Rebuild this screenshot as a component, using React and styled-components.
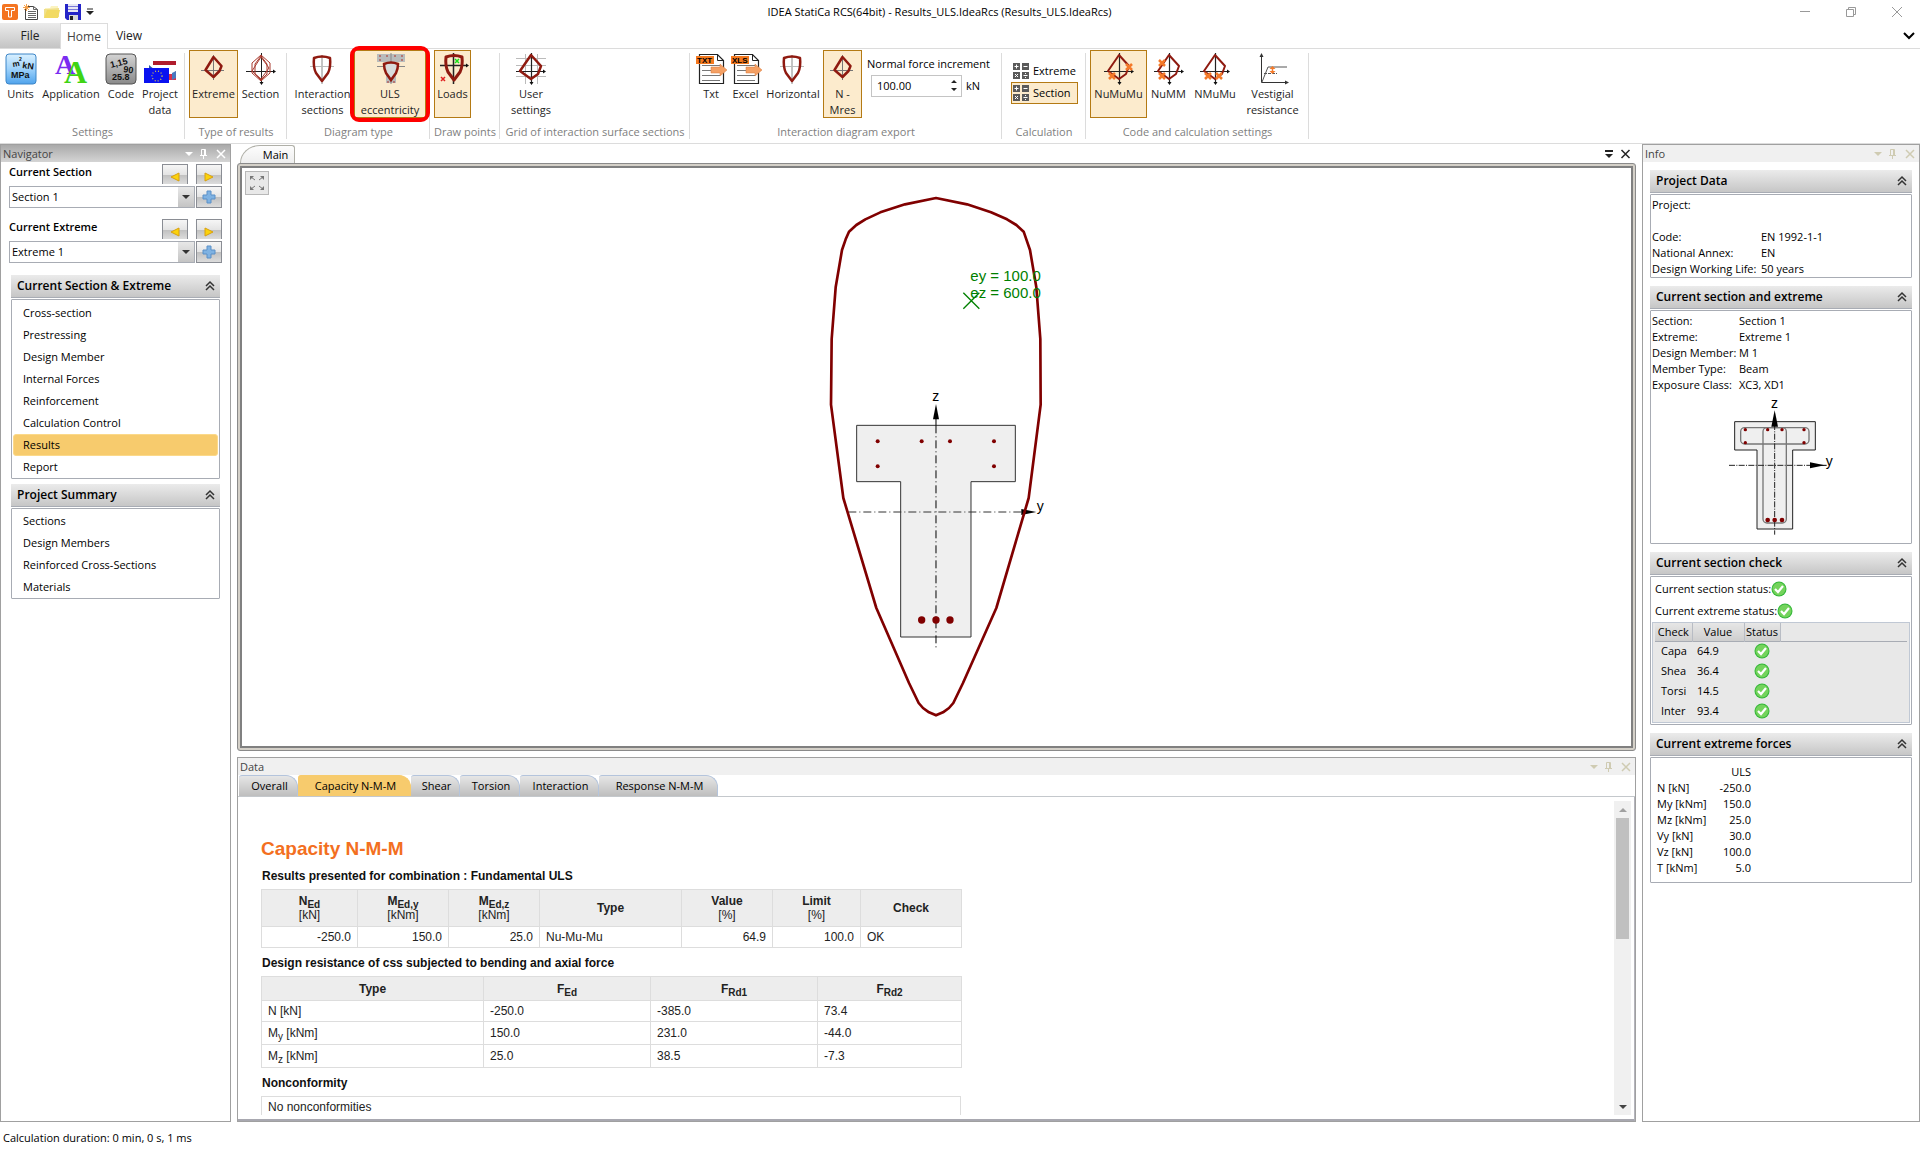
import React from "react"
import styled, { createGlobalStyle, css } from "styled-components"

const RED = "#8f1a10"
const BAR = "#800000"

const GlobalStyle = createGlobalStyle`
  * {
    box-sizing: border-box;
  }
  body {
    margin: 0;
    background: #fff;
    color: #000;
    font-family: "Open Sans", "Noto Sans", sans-serif;
    font-size: 11px;
    line-height: 16px;
  }
  button, input, select {
    font: inherit;
    color: inherit;
  }
  button {
    padding: 0;
    border: 0;
    background: none;
  }
  svg {
    display: block;
    flex: none;
    overflow: visible;
  }
`

/* ---------- icons ---------- */

const Icon = ({ w = 32, h = w, children }) => (
  <svg width={w} height={h} viewBox={`0 0 ${w} ${h}`} fill="none" aria-hidden="true">
    {children}
  </svg>
)

const LogoIcon = () => (
  <Icon w={16}>
    <rect width="16" height="16" rx="2" fill="#f47421" />
    <path d="M3.500 3.500h9v3h-3v6.500h-3v-6.500h-3z" stroke="#fff" strokeWidth="1" />
  </Icon>
)

const NewIcon = () => (
  <Icon w={16}>
    <path d="M2.500 2.500h8l4 3v10h-12z" fill="#fff" stroke="#444" />
    <path d="M10.500 2.500v3h4M5 7.500h8M5 9.500h8M5 11.500h8M5 13.500h8" stroke="#666" />
    <path d="M3.500 0v7M0 3.500h7M1 1l5 5M6 1l-5 5" stroke="#f5a04a" />
  </Icon>
)

const OpenIcon = () => (
  <Icon w={16}>
    <path d="M1 4h5l1-2h7v4H1z" fill="#fbf3c0" />
    <path d="M0 14V5h3l12-1v9z" fill="#f0e08a" />
    <path d="M0 14L3 6h13l-2 8z" fill="#f2da62" />
  </Icon>
)

const SaveIcon = () => (
  <Icon w={16}>
    <path d="M0 0h16v16H2l-2-2z" fill="#2424c8" />
    <rect x="3" y="0" width="10" height="8" fill="#e8e8f4" />
    <path d="M3 2.500h10M3 5.500h10" stroke="#7a7ad8" />
    <rect x="4" y="11" width="9" height="5" fill="#d8d8d8" />
    <rect x="5" y="12" width="3" height="4" fill="#222" />
  </Icon>
)

const CaretIcon = () => (
  <Icon w={8} h={8}>
    <path d="M1 1h6" stroke="#222" />
    <path d="M0 3h8L4 7z" fill="#222" />
  </Icon>
)

const UnitsIcon = () => (
  <Icon>
    <defs>
      <linearGradient id="units" x1="0" y1="0" x2="0" y2="1">
        <stop offset="0" stopColor="#d9f0ff" />
        <stop offset="0.5" stopColor="#9ed2fb" />
        <stop offset="1" stopColor="#4fa3ec" />
      </linearGradient>
    </defs>
    <rect x="1" y="1" width="30" height="30" rx="3" fill="url(#units)" stroke="#3d86c8" />
    <g fill="#111" fontFamily="Liberation Sans" fontWeight="bold">
      <text x="8" y="14" fontSize="8" transform="rotate(-10 8 14)">m</text>
      <text x="14" y="8" fontSize="5">2</text>
      <text x="17" y="15" fontSize="9" transform="rotate(8 17 15)">kN</text>
      <text x="6" y="25" fontSize="9">MPa</text>
    </g>
  </Icon>
)

const ApplicationIcon = () => (
  <Icon>
    <g fontFamily="Liberation Serif" fontWeight="bold">
      <text x="0" y="21" fontSize="28" fill="#7a2cf0">A</text>
      <text x="9" y="30" fontSize="32" fill="#3fd414">A</text>
    </g>
  </Icon>
)

const CodeIcon = () => (
  <Icon>
    <defs>
      <linearGradient id="code" x1="0" y1="0" x2="0" y2="1">
        <stop offset="0" stopColor="#d4d4d4" />
        <stop offset="1" stopColor="#8a8a8a" />
      </linearGradient>
    </defs>
    <rect x="1" y="1" width="30" height="30" rx="4" fill="url(#code)" stroke="#555" />
    <g fill="#111" fontFamily="Liberation Sans" fontWeight="bold" fontSize="9">
      <text x="6" y="15" transform="rotate(-14 6 15)">1,15</text>
      <text x="18" y="19" transform="rotate(8 18 19)">90</text>
      <text x="7" y="27">25.8</text>
    </g>
  </Icon>
)

const ProjectIcon = () => (
  <Icon>
    <path d="M9 10h23" stroke="#b01c2c" strokeWidth="4" />
    <path d="M5 12l6 5H5z" fill="#2b5aa8" />
    <path d="M24 21h5l3-3v9h-8z" fill="#d8304a" />
    <path d="M28 20l4-2v7l-4 2z" fill="#4a78c0" />
    <rect x="0" y="15" width="25" height="15" fill="#0a12f0" />
    <circle cx="13" cy="23" r="5" stroke="#e8d83c" strokeWidth="1.200" strokeDasharray="1 2" />
  </Icon>
)

const ExtremeIcon = () => (
  <Icon>
    <path d="M15.500 2v25M3 17.500h23" stroke="#777" />
    <path d="M15.500 4l8 9-2 5-6 6-8-7z" stroke={RED} strokeWidth="2.500" strokeLinejoin="round" />
  </Icon>
)

const SectionIcon = () => (
  <Icon>
    <path d="M16.500 0v31M1 18.500h29" stroke="#222" />
    <path d="M31 18.500l-3-2v4zM16.500 32l-2-3h4z" fill="#111" />
    <g stroke="#a8382c">
      <path d="M16 2L7 10v10l9 8 9-8V10z" />
      <path d="M16 3l-6 8v10l6 6 6-6V11z" />
      <path d="M16 4l-9 14 9 8 8-11z" />
    </g>
  </Icon>
)

const SHIELD = "M7 5Q15 2 23 5Q24 14 21 20L15 28L9 20Q6 14 7 5Z"

const ShieldIcon = () => (
  <Icon>
    <path d="M15 2v29" stroke="#888" />
    <path d="M3 13.500h24" stroke="#bbb" />
    <path d={SHIELD} stroke={RED} strokeWidth="2.500" strokeLinejoin="round" />
  </Icon>
)

const UlsIcon = () => (
  <Icon>
    <path d="M3 1h28v8H22v21H12V9H3z" fill="#b9bcbc" />
    <path d="M17 0v31M3 13.500h28" stroke="#888" />
    <path d="M10 11q7-3 14 0 0 5-2 9l-5 7-5-7q-2-4-2-9z" fill="#d8dcdc" stroke={RED} strokeWidth="2.500" />
    <path d="M5 3h2M5 7h2M12 3h2M20 3h2M27 3h2M27 7h2M13 29h2M19 29h2" stroke="#b03028" />
  </Icon>
)

const LoadsIcon = () => (
  <Icon>
    <path d="M16.500 0v31M3 12.500h27" stroke="#222" strokeWidth="1.500" />
    <path d="M32 12.500l-3-2v4z" fill="#111" />
    <path d={SHIELD} stroke={RED} strokeWidth="3" strokeLinejoin="round" transform="translate(2 -1)" />
    <path d="M18 6l4 4M22 6l-4 4" stroke="#18e018" strokeWidth="1.500" />
    <path d="M4 24l4 4M8 24l-4 4" stroke="#e02020" strokeWidth="1.500" />
  </Icon>
)

const NEU = "M16 2L26 13l-3 8-7 5L5 18z"

const UserIcon = () => (
  <Icon>
    <path d="M10.500 1v30M22.500 1v30M1 5.500h30M1 12.500h30M1 23.500h30" stroke="#bbb" />
    <path d="M16.500 0v31M1 18.500h29" stroke="#222" strokeWidth="1.200" />
    <path d="M31 18.500l-3-2v4zM16.500 32l-2-3h4z" fill="#111" />
    <path d={NEU} stroke={RED} strokeWidth="2.500" strokeLinejoin="round" />
  </Icon>
)

const NeuIcon = ({ marks }) => (
  <Icon>
    <path d="M16.500 0v31M1 18.500h29" stroke="#222" strokeWidth="1.200" />
    <path d="M31 18.500l-3-2v4zM16.500 32l-2-3h4z" fill="#111" />
    <path d={NEU} stroke={RED} strokeWidth="2" strokeLinejoin="round" />
    {marks.map(([x, y]) => (
      <path
        key={`${x}-${y}`}
        d={`M${x - 3} ${y - 3}l6 6M${x + 3} ${y - 3}l-6 6`}
        stroke="#f47a2a"
        strokeWidth="2.500"
      />
    ))}
  </Icon>
)

const FileIcon = ({ tag }) => (
  <Icon>
    <path d="M4.500 1.500h18l6 6v23h-24z" fill="#fff" stroke="#222" strokeWidth="1.200" />
    <path d="M22.500 1.500v6h6" stroke="#222" />
    <path d="M7 12.500h18M7 17.500h18M7 22.500h18M7 27.500h18" stroke="#777" />
    <rect x="1" y="3" width="18" height="8" fill="#f47a20" />
    <text x="2" y="10" fontFamily="Liberation Sans" fontWeight="bold" fontSize="8" fill="#000">{tag}</text>
    <path d="M16 14h9v-3l7 6-7 6v-3h-9z" fill="#f4a064" stroke="#d87838" strokeWidth="0.500" />
  </Icon>
)

const VestigialIcon = () => (
  <Icon>
    <path d="M4.500 3v26.500H30" stroke="#333" />
    <path d="M4.500 0l-2 4h4zM32 29.500l-4-2v4z" fill="#333" />
    <path d="M5 29l6-15h19" stroke="#555" />
    <path d="M7 20.500h13" stroke="#555" strokeDasharray="3 1" />
    <path d="M15.500 14v6" stroke="#f47a2a" strokeWidth="1.500" />
    <path d="M15.500 13l-3 3h6zM15.500 21l-3-3h6z" fill="#f47a2a" />
  </Icon>
)

const CalcIcon = () => (
  <Icon w={16}>
    <path d="M0 0h7v7H0zM9 0h7v7H9zM0 9h7v7H0zM9 9h7v7H9z" fill="#5a5a5a" />
    <path
      d="M3.500 1.500v4M1.500 3.500h4M10.500 3.500h4M2 11l3 3M5 11l-3 3M10.500 12.500h4M12.500 10v1M12.500 14v1"
      stroke="#fff"
    />
  </Icon>
)

const PaneTools = ({ color }) => (
  <Icon w={42} h={10}>
    <path d="M1 3h8L5 7z" fill={color} />
    <path d="M17.500 6.500v-6h4v6M16 6.500h7M19.500 7v3M20.500 1v5" stroke={color} />
    <path d="M33 1l8 8M41 1l-8 8" stroke={color} strokeWidth="1.500" />
  </Icon>
)

const CollapseIcon = () => (
  <Icon w={10}>
    <path d="M1 5l4-4 4 4M1 9l4-4 4 4" stroke="#333" strokeWidth="1.500" />
  </Icon>
)

const OkIcon = () => (
  <Icon w={16}>
    <circle cx="8" cy="8" r="7.500" fill="#35b83a" />
    <circle cx="8" cy="8" r="6.500" fill="#74d35c" />
    <path d="M4 8l3 3 5-6" stroke="#fff" strokeWidth="2.200" />
  </Icon>
)

const ArrowIcon = ({ right }) => (
  <Icon w={10}>
    <path d={right ? "M1 1l8 4-8 4z" : "M9 1L1 5l8 4z"} fill="#fbd20c" stroke="#d8a010" />
  </Icon>
)

const PlusIcon = () => (
  <Icon w={14}>
    <path d="M5 1h4v4h4v4H9v4H5V9H1V5h4z" fill="#7fb2e2" stroke="#5a90c8" />
  </Icon>
)

/* ---------- shell ---------- */

const Page = styled.div`
  min-height: 100vh;
  display: grid;
  grid-template-rows: auto auto auto 1fr auto;
`

const TitleBar = styled.header`
  display: grid;
  grid-template-columns: 1fr auto 1fr;
  align-items: center;
  height: 23px;
`

const QuickAccess = styled.div`
  display: flex;
  align-items: center;
  gap: 5px;
  padding-left: 2px;
`

const WindowTitle = styled.h1`
  margin: 0;
  padding-right: 41px;
  font-size: 11px;
  font-weight: 400;
`

const WindowButtons = styled.div`
  display: flex;
  justify-content: flex-end;

  button {
    display: grid;
    place-items: center;
    width: 46px;
    height: 22px;
  }
`

const TabBar = styled.nav`
  display: flex;
  height: 26px;
  border-bottom: 1px solid #dcdcdc;
`

const RibbonTab = styled.button`
  height: 25px;
  padding: 0 8px;
  font-size: 12px;
  color: #222;

  ${({ $kind }) =>
    $kind === "file" &&
    css`
      width: 60px;
      background: linear-gradient(#ececec, #c4c4c4);
    `}
  ${({ $kind }) =>
    $kind === "active" &&
    css`
      height: 26px;
      padding: 0 6px;
      border: 1px solid #dcdcdc;
      border-bottom: 0;
      background: #fff;
      color: #444;
    `}
`

const Expander = styled.button`
  margin-left: auto;
  padding-right: 5px;
`

const Ribbon = styled.section`
  display: flex;
  height: 95px;
  padding-top: 1px;
  border-bottom: 1px solid #dcdcdc;
`

const Group = styled.div`
  display: flex;
  flex: none;
  flex-direction: column;
  justify-content: space-between;
  position: relative;
  width: ${({ $width }) => $width}px;
  padding-bottom: 3px;

  &::after {
    content: "";
    position: absolute;
    top: 3px;
    right: 0;
    width: 1px;
    height: 86px;
    background: #dcdcdc;
  }
`

const GroupTools = styled.div`
  display: flex;
  height: 68px;
  padding-left: ${({ $indent = 0 }) => $indent}px;
`

const GroupLabel = styled.div`
  color: #808080;
  text-align: center;
  white-space: nowrap;
`

const RibbonButton = styled.button`
  display: flex;
  flex: none;
  flex-direction: column;
  align-items: center;
  gap: 1px;
  width: ${({ $width }) => $width}px;
  padding-top: 2px;
  border: 1px solid transparent;
  color: #1e1e1e;
  white-space: pre;

  ${({ $on }) =>
    $on &&
    css`
      border-color: #b47a14;
      background: #fcebcd;
    `}
`

/* red ring drawn round the ULS eccentricity button */
const Callout = styled.div`
  position: relative;
  display: flex;

  &::after {
    content: "";
    position: absolute;
    inset: -4px;
    border: 4px solid #f00;
    border-radius: 9px;
    pointer-events: none;
    z-index: 1;
  }
`

const Increment = styled.div`
  padding: 6px 0 0 5px;

  label {
    display: block;
    height: 19px;
    white-space: nowrap;
  }
`

const SpinRow = styled.div`
  display: flex;
  align-items: center;
  gap: 4px;
  padding-left: 4px;
`

const Spinner = styled.div`
  display: flex;
  align-items: center;
  width: 91px;
  height: 22px;
  padding-right: 4px;
  border: 1px solid #c4c4c4;

  input {
    flex: 1;
    min-width: 0;
    padding: 0 5px;
    border: 0;
    outline: 0;
    background: none;
  }
`

const CalcTools = styled.div`
  display: flex;
  flex-direction: column;
  align-items: flex-start;
  padding: 10px 0 0 9px;
`

const CalcButton = styled.button`
  display: flex;
  align-items: center;
  gap: 4px;
  width: 67px;
  height: 22px;
  padding-left: 1px;
  border: 1px solid ${({ $on }) => ($on ? "#b47a14" : "transparent")};
  background: ${({ $on }) => ($on ? "#fcebcd" : "none")};
`

const Workspace = styled.main`
  display: grid;
  grid-template-columns: 231px minmax(0, 1fr) 278px;
  gap: 6px;
  min-height: 0;
`

const StatusBar = styled.footer`
  height: 30px;
  padding: 8px 3px 0;
`

/* ---------- panes ---------- */

const Pane = styled.section`
  display: flex;
  flex-direction: column;
  min-width: 0;
  border: 1px solid #a0a0a0;
`

const PaneTitle = styled.div`
  display: flex;
  flex: none;
  align-items: center;
  justify-content: space-between;
  height: 17px;
  padding: 0 4px 0 2px;
  color: #444;
  background: ${({ $active }) => ($active ? "linear-gradient(#aaa, #d4d4d4)" : "#f0f0f0")};
`

const Pickers = styled.div`
  padding-bottom: 3px;
`

const Picker = styled.div`
  display: grid;
  grid-template-columns: 145px 26px 26px;
  column-gap: 8px;
  padding: 2px 0 9px 8px;

  label {
    font-weight: 600;
  }
`

const ComboRow = styled.div`
  grid-column: 1 / -1;
  display: flex;
  gap: 1px;
  margin-top: 2px;
`

const Combo = styled.div`
  position: relative;
  width: 187px;
  height: 22px;

  select {
    width: 100%;
    height: 100%;
    padding: 0 22px 0 2px;
    border: 1px solid #a8acb4;
    border-radius: 0;
    background: #fff;
    appearance: none;
  }
`

const ComboArrow = styled.span`
  position: absolute;
  top: 1px;
  right: 1px;
  display: grid;
  place-items: center;
  width: 16px;
  height: 20px;
  background: linear-gradient(#e8e8e8, #c4c4c4);
  pointer-events: none;
`

const StepButton = styled.button`
  display: grid;
  place-items: center;
  width: 26px;
  height: ${({ $tall }) => ($tall ? 22 : 20)}px;
  padding-top: ${({ $tall }) => ($tall ? 0 : 4)}px;
  border: 1px solid #8a8d94;
  border-bottom-width: ${({ $tall }) => ($tall ? 1 : 0)}px;
  background: linear-gradient(#f6f6f6 0%, #e4e4e4 50%, #c0c0c0 52%, #dcdcdc 100%);
`

const Block = styled.section`
  margin: 0 ${({ $side = 7 }) => $side}px ${({ $gap = 8 }) => $gap}px;
`

const BlockHead = styled.header`
  display: flex;
  align-items: center;
  justify-content: space-between;
  height: 23px;
  padding: 0 5px 0 6px;
  border-bottom: 1px solid #a8acb4;
  background: linear-gradient(#ebebeb, #c6c6c6);

  h2 {
    margin: 0;
    font-size: 12px;
    font-weight: 600;
  }
`

const BlockBody = styled.div`
  height: ${({ $height }) => ($height ? `${$height}px` : "auto")};
  margin-top: 1px;
  padding: ${({ $pad = "0" }) => $pad};
  border: 1px solid #a8acb4;
  border-radius: 1px;
`

const NavItem = styled.button`
  display: block;
  width: 100%;
  height: 22px;
  padding-left: 9px;
  border: 1px solid transparent;
  border-radius: 3px;
  text-align: left;

  ${({ $on }) =>
    $on &&
    css`
      border-color: #fbd98a;
      background: #f7cb6d;
    `}
`

const InfoList = styled.div`
  padding-top: 8px;
`

const Facts = styled.dl`
  display: grid;
  grid-template-columns: ${({ $label }) => $label}px 1fr;
  margin: 0;
  white-space: nowrap;

  dt, dd {
    min-height: 16px;
    margin: 0;
  }
`

const MiniDrawing = styled.div`
  display: flex;
  justify-content: center;
  padding-top: 1px;
`

const StatusLine = styled.div`
  display: flex;
  align-items: center;
  height: 22px;
  padding-left: 4px;
`

const CheckBox = styled.div`
  margin: 0 1px;
  padding: 0 2px 1px;
  border: 1px solid #c0c8d4;
  background: #e8e8e8;
`

const CheckTable = styled.table`
  width: 100%;
  table-layout: fixed;
  border-collapse: collapse;

  thead tr {
    height: 18px;
    border-bottom: 1px solid #a8acb4;
  }
  tbody tr {
    height: 20px;
  }
  th, td {
    padding: 0;
    font-weight: 400;
  }
  th {
    border-right: 1px solid #b8bcc4;
    background: linear-gradient(#e6e6e6, #cecece);
  }
  th:last-child {
    border-right: 0;
    background: none;
  }
  td:nth-child(1) {
    padding-left: 6px;
  }
  td:nth-child(2) {
    padding-left: 5px;
  }
  td svg {
    margin: 0 auto;
  }
`

const ForceTable = styled.table`
  border-collapse: collapse;

  th, td {
    height: 16px;
    padding: 0;
    font-weight: 400;
    text-align: left;
  }
  th:first-child {
    width: 54px;
    white-space: nowrap;
  }
  td, thead th:last-child {
    width: 40px;
    text-align: right;
  }
`

/* ---------- centre ---------- */

const Centre = styled.div`
  display: grid;
  grid-template-rows: 19px minmax(0, 1fr) 365px;
  min-width: 0;
`

const DocTabs = styled.div`
  display: flex;
  align-items: flex-end;
  justify-content: space-between;
  padding: 0 6px 0 3px;

  > svg {
    margin-bottom: 4px;
  }
`

const DocTab = styled.button`
  width: 55px;
  height: 18px;
  padding-left: 16px;
  border: 1px solid #b0b0a8;
  border-bottom: 0;
  border-radius: 20px 3px 0 0 / 18px 3px 0 0;
  background: linear-gradient(#fdfdfd, #eee);
`

const Canvas = styled.div`
  position: relative;
  display: flex;
  justify-content: center;
  margin-bottom: 6px;
  padding-top: 29px;
  border: 1px solid #8a8a8a;
  border-radius: 3px;
  box-shadow: inset 0 0 0 2px #d4d0c8, inset 0 0 0 4px #808080;
`

const FitButton = styled.button`
  position: absolute;
  top: 7px;
  left: 7px;
  display: grid;
  place-items: center;
  width: 24px;
  height: 24px;
  border: 1px solid #b8b8b8;
  background: #e8e8e8;
`

const DataTabs = styled.div`
  display: flex;
  flex: none;
  height: 22px;
  padding-left: 1px;
  border-bottom: 1px solid #c4c8cc;
`

const DataTab = styled.button`
  height: 21px;
  width: ${({ $width }) => $width}px;
  padding-left: 3px;
  border: 1px solid ${({ $on }) => ($on ? "#f7cb6d" : "#b4c4dc")};
  border-bottom: 0;
  border-left-width: 0;
  border-radius: 3px 12px 0 0;
  background: ${({ $on }) => ($on ? "#f7cb6d" : "linear-gradient(#e6e6e6, #bebebe)")};
`

const ReportArea = styled.div`
  display: flex;
  flex: 1;
  min-height: 0;
  padding: 4px 3px 4px 0;
  border-right: 1px solid #b4b4bc;
  border-bottom: 2px solid #a8a8b0;
`

const Report = styled.article`
  flex: 1;
  overflow: hidden;
  padding: 36px 0 0 23px;
  font-family: "Liberation Sans", Arial, sans-serif;
  font-size: 12px;

  h2 {
    margin: 0 0 7px;
    color: #f36f21;
    font-size: 19px;
    line-height: 24px;
  }
  h3 {
    margin: 0 0 5px 1px;
    font-size: 12px;
    line-height: 16px;
    color: #111;
  }
`

const ReportTable = styled.table`
  width: 700px;
  margin-bottom: 7px;
  table-layout: fixed;
  border-collapse: collapse;
  color: #222;

  th, td {
    height: 21px;
    padding: 0 6px;
    border: 1px solid #ddd;
    line-height: 14px;
    text-align: left;
  }
  th {
    height: ${({ $head }) => $head}px;
    background: #ededed;
    text-align: center;
  }
  th small {
    display: block;
    font-size: 12px;
    font-weight: 400;
  }
  tr.tall td {
    height: 23px;
  }
  sub {
    font-size: 10px;
    line-height: 0;
  }
  .num {
    text-align: right;
  }
`

const ScrollBar = styled.div`
  display: grid;
  grid-template-rows: 17px 121px 1fr;
  justify-items: center;
  width: 17px;
  background: #f0f0f0;
`

const Thumb = styled.div`
  width: 13px;
  background: #c0c0c0;
`

const ScrollArrow = styled.button`
  display: grid;
  place-items: center;
  align-self: end;
  width: 17px;
  height: 17px;
`

/* ---------- data ---------- */

const SECTION_NAV = [
  "Cross-section",
  "Prestressing",
  "Design Member",
  "Internal Forces",
  "Reinforcement",
  "Calculation Control",
  "Results",
  "Report",
]

const SUMMARY_NAV = ["Sections", "Design Members", "Reinforced Cross-Sections", "Materials"]

const CHECKS = [
  ["Capa", "64.9"],
  ["Shea", "36.4"],
  ["Torsi", "14.5"],
  ["Inter", "93.4"],
]

const FORCES = [
  ["N [kN]", "-250.0"],
  ["My [kNm]", "150.0"],
  ["Mz [kNm]", "25.0"],
  ["Vy [kN]", "30.0"],
  ["Vz [kN]", "100.0"],
  ["T [kNm]", "5.0"],
]

const DATA_TABS = [
  ["Overall", 59],
  ["Capacity N-M-M", 113],
  ["Shear", 49],
  ["Torsion", 60],
  ["Interaction", 79],
  ["Response N-M-M", 119],
]

/* ---------- drawings ---------- */

const OUTLINE =
  "467,115 560,134 632,158 680,179 708,196 730,216 738,239 749,271 768,383 780,538 781,735 745,1015 648,1345 548,1570 519,1630 506,1645 488,1658 467,1667 446,1658 428,1645 415,1630 386,1570 288,1345 189,1015 152,735 154,538 166,383 185,271 196,239 206,216 228,196 255,179 300,158 374,134"

const SectionDiagram = () => (
  <svg width="220" height="527" viewBox="140 100 660 1581" fill="none">
    <path d="M229 797H705V966H572V1432H361V966H229Z" fill="#efefef" stroke="#333" strokeWidth="3" />
    <path d="M467 797V1465" stroke="#000" strokeWidth="3" strokeDasharray="24 9 3 9" />
    <path d="M204 1057H725" stroke="#333" strokeWidth="3" strokeDasharray="24 9 3 9" />
    <path d="M467 775V797" stroke="#000" strokeWidth="3" />
    <polygon points="467,733 458,779 476,779" fill="#000" />
    <polygon points="723,1048 768,1057 723,1066" fill="#000" />
    <g fill={BAR}>
      {[[292, 845], [424, 845], [509, 845], [641, 845], [292, 920], [641, 920]].map(([x, y]) => (
        <circle key={`${x}-${y}`} cx={x} cy={y} r="6" />
      ))}
      {[424, 467, 509].map((x) => (
        <circle key={x} cx={x} cy="1381" r="11" />
      ))}
    </g>
    <polygon points={OUTLINE} stroke={BAR} strokeWidth="8" strokeLinejoin="round" />
    <path d="M549 399L597 447M597 399L549 447" stroke="#008000" strokeWidth="4" />
    <g fontFamily="Liberation Sans" fontSize="45">
      <text x="570" y="364" fill="#008000">ey = 100.0</text>
      <text x="570" y="415" fill="#008000">ez = 600.0</text>
      <text x="456" y="724" fill="#000" fontSize="42">z</text>
      <text x="769" y="1055" fill="#000" fontSize="42">y</text>
    </g>
  </svg>
)

const SectionThumb = () => (
  <svg width="106" height="141" viewBox="384 760 318 423" fill="none">
    <path d="M404 843H646V928H578V1165H471V928H404Z" fill="#efefef" stroke="#222" strokeWidth="3" />
    <rect x="422" y="861" width="205" height="49" rx="12" stroke="#777" strokeWidth="4" />
    <rect x="489" y="861" width="70" height="286" rx="12" stroke="#777" strokeWidth="4" />
    <path d="M524 850V1182M387 974H640" stroke="#222" strokeWidth="3" strokeDasharray="18 4 3 4" />
    <path d="M640 974H680" stroke="#000" strokeWidth="3" />
    <polygon points="524,809 514,858 534,858" fill="#000" />
    <polygon points="630,965 674,974 630,983" fill="#000" />
    <g fill={BAR}>
      {[[436, 867], [503, 867], [546, 867], [612, 867], [436, 906], [612, 906]].map(([x, y]) => (
        <circle key={`${x}-${y}`} cx={x} cy={y} r="5" />
      ))}
      {[503, 524, 546].map((x) => (
        <circle key={x} cx={x} cy="1138" r="7" />
      ))}
    </g>
    <g fill="#000" fontFamily="Liberation Sans" fontSize="42">
      <text x="513" y="802">z</text>
      <text x="677" y="976">y</text>
    </g>
  </svg>
)

/* ---------- parts ---------- */

const Tool = ({ icon, label, width, on }) => (
  <RibbonButton $width={width} $on={on} aria-pressed={on}>
    {icon}
    {label}
  </RibbonButton>
)

const SectionBlock = ({ title, children, height, pad, ...rest }) => (
  <Block {...rest}>
    <BlockHead>
      <h2>{title}</h2>
      <button aria-label="Collapse">
        <CollapseIcon />
      </button>
    </BlockHead>
    <BlockBody $height={height} $pad={pad}>
      {children}
    </BlockBody>
  </Block>
)

const CurrentPicker = ({ id, label, value }) => (
  <Picker>
    <label htmlFor={id}>{label}</label>
    <StepButton aria-label="Previous">
      <ArrowIcon />
    </StepButton>
    <StepButton aria-label="Next">
      <ArrowIcon right />
    </StepButton>
    <ComboRow>
      <Combo>
        <select id={id} defaultValue={value}>
          <option>{value}</option>
        </select>
        <ComboArrow>
          <Icon w={8} h={4}>
            <path d="M0 0h8L4 4z" fill="#333" />
          </Icon>
        </ComboArrow>
      </Combo>
      <StepButton $tall aria-label="Add">
        <PlusIcon />
      </StepButton>
    </ComboRow>
  </Picker>
)

const RibbonBar = () => (
  <Ribbon>
    <Group $width={185}>
      <GroupTools>
        <Tool width={41} icon={<UnitsIcon />} label="Units" />
        <Tool width={60} icon={<ApplicationIcon />} label="Application" />
        <Tool width={40} icon={<CodeIcon />} label="Code" />
        <Tool width={38} icon={<ProjectIcon />} label={"Project\ndata"} />
      </GroupTools>
      <GroupLabel>Settings</GroupLabel>
    </Group>
    <Group $width={102}>
      <GroupTools $indent={4}>
        <Tool on width={49} icon={<ExtremeIcon />} label="Extreme" />
        <Tool width={45} icon={<SectionIcon />} label="Section" />
      </GroupTools>
      <GroupLabel>Type of results</GroupLabel>
    </Group>
    <Group $width={143}>
      <GroupTools $indent={4}>
        <Tool width={63} icon={<ShieldIcon />} label={"Interaction\nsections"} />
        <Callout>
          <Tool on width={72} icon={<UlsIcon />} label={"ULS\neccentricity"} />
        </Callout>
      </GroupTools>
      <GroupLabel>Diagram type</GroupLabel>
    </Group>
    <Group $width={70}>
      <GroupTools $indent={4}>
        <Tool on width={37} icon={<LoadsIcon />} label="Loads" />
      </GroupTools>
      <GroupLabel>Draw points</GroupLabel>
    </Group>
    <Group $width={190}>
      <GroupTools $indent={4}>
        <Tool width={54} icon={<UserIcon />} label={"User\nsettings"} />
      </GroupTools>
      <GroupLabel>Grid of interaction surface sections</GroupLabel>
    </Group>
    <Group $width={312}>
      <GroupTools $indent={4}>
        <Tool width={34} icon={<FileIcon tag="TXT" />} label="Txt" />
        <Tool width={35} icon={<FileIcon tag="XLS" />} label="Excel" />
        <Tool width={60} icon={<ShieldIcon />} label="Horizontal" />
        <Tool on width={39} icon={<ExtremeIcon />} label={"N -\nMres"} />
        <Increment>
          <label htmlFor="increment">Normal force increment</label>
          <SpinRow>
            <Spinner>
              <input id="increment" defaultValue="100.00" />
              <Icon w={6} h={14}>
                <path d="M0 4l3-3 3 3zM0 9h6l-3 3z" fill="#222" />
              </Icon>
            </Spinner>
            kN
          </SpinRow>
        </Increment>
      </GroupTools>
      <GroupLabel>Interaction diagram export</GroupLabel>
    </Group>
    <Group $width={84}>
      <CalcTools>
        <CalcButton>
          <CalcIcon />
          Extreme
        </CalcButton>
        <CalcButton $on>
          <CalcIcon />
          Section
        </CalcButton>
      </CalcTools>
      <GroupLabel>Calculation</GroupLabel>
    </Group>
    <Group $width={223}>
      <GroupTools $indent={4}>
        <Tool on width={57} icon={<NeuIcon marks={[[26, 14], [9, 23]]} />} label="NuMuMu" />
        <Tool width={43} icon={<NeuIcon marks={[[9, 10], [9, 23]]} />} label="NuMM" />
        <Tool width={50} icon={<NeuIcon marks={[[9, 23], [20, 23]]} />} label="NMuMu" />
        <Tool width={65} icon={<VestigialIcon />} label={"Vestigial\nresistance"} />
      </GroupTools>
      <GroupLabel>Code and calculation settings</GroupLabel>
    </Group>
  </Ribbon>
)

const Navigator = () => (
  <Pane>
    <PaneTitle $active>
      Navigator
      <PaneTools color="#fff" />
    </PaneTitle>
    <Pickers>
      <CurrentPicker id="section" label="Current Section" value="Section 1" />
      <CurrentPicker id="extreme" label="Current Extreme" value="Extreme 1" />
    </Pickers>
    <SectionBlock title="Current Section & Extreme" pad="2px 1px 0" $side={10} $gap={5}>
      {SECTION_NAV.map((item) => (
        <NavItem key={item} $on={item === "Results"}>
          {item}
        </NavItem>
      ))}
    </SectionBlock>
    <SectionBlock title="Project Summary" pad="1px 1px 0" $side={10}>
      {SUMMARY_NAV.map((item) => (
        <NavItem key={item}>{item}</NavItem>
      ))}
    </SectionBlock>
  </Pane>
)

const DataPane = () => (
  <Pane>
    <PaneTitle>
      Data
      <PaneTools color="#cfcbb2" />
    </PaneTitle>
    <DataTabs>
      {DATA_TABS.map(([name, width]) => (
        <DataTab key={name} $width={width} $on={name === "Capacity N-M-M"}>
          {name}
        </DataTab>
      ))}
    </DataTabs>
    <ReportArea>
      <Report>
        <h2>Capacity N-M-M</h2>
        <h3>Results presented for combination : Fundamental ULS</h3>
        <ReportTable $head={37}>
          <colgroup>
            <col width="96" />
            <col width="91" />
            <col width="91" />
            <col width="142" />
            <col width="91" />
            <col width="88" />
            <col width="101" />
          </colgroup>
          <thead>
            <tr>
              <th>N<sub>Ed</sub><small>[kN]</small></th>
              <th>M<sub>Ed,y</sub><small>[kNm]</small></th>
              <th>M<sub>Ed,z</sub><small>[kNm]</small></th>
              <th>Type</th>
              <th>Value<small>[%]</small></th>
              <th>Limit<small>[%]</small></th>
              <th>Check</th>
            </tr>
          </thead>
          <tbody>
            <tr>
              <td className="num">-250.0</td>
              <td className="num">150.0</td>
              <td className="num">25.0</td>
              <td>Nu-Mu-Mu</td>
              <td className="num">64.9</td>
              <td className="num">100.0</td>
              <td>OK</td>
            </tr>
          </tbody>
        </ReportTable>
        <h3>Design resistance of css subjected to bending and axial force</h3>
        <ReportTable $head={24}>
          <colgroup>
            <col width="222" />
            <col width="167" />
            <col width="167" />
            <col width="144" />
          </colgroup>
          <thead>
            <tr>
              <th>Type</th>
              <th>F<sub>Ed</sub></th>
              <th>F<sub>Rd1</sub></th>
              <th>F<sub>Rd2</sub></th>
            </tr>
          </thead>
          <tbody>
            <tr>
              <td>N [kN]</td>
              <td>-250.0</td>
              <td>-385.0</td>
              <td>73.4</td>
            </tr>
            <tr className="tall">
              <td>M<sub>y</sub> [kNm]</td>
              <td>150.0</td>
              <td>231.0</td>
              <td>-44.0</td>
            </tr>
            <tr className="tall">
              <td>M<sub>z</sub> [kNm]</td>
              <td>25.0</td>
              <td>38.5</td>
              <td>-7.3</td>
            </tr>
          </tbody>
        </ReportTable>
        <h3>Nonconformity</h3>
        <ReportTable>
          <tbody>
            <tr>
              <td>No nonconformities</td>
            </tr>
          </tbody>
        </ReportTable>
      </Report>
      <ScrollBar>
        <ScrollArrow aria-label="Scroll up">
          <Icon w={8} h={4}>
            <path d="M0 4h8L4 0z" fill="#a0a0a0" />
          </Icon>
        </ScrollArrow>
        <Thumb />
        <ScrollArrow aria-label="Scroll down">
          <Icon w={8} h={4}>
            <path d="M0 0h8L4 4z" fill="#444" />
          </Icon>
        </ScrollArrow>
      </ScrollBar>
    </ReportArea>
  </Pane>
)

const InfoPane = () => (
  <Pane>
    <PaneTitle>
      Info
      <PaneTools color="#cfcbb2" />
    </PaneTitle>
    <InfoList>
      <SectionBlock title="Project Data" height={84} pad="2px 1px">
        <Facts $label={109}>
          <dt>Project:</dt>
          <dd />
          <dt />
          <dd />
          <dt>Code:</dt>
          <dd>EN 1992-1-1</dd>
          <dt>National Annex:</dt>
          <dd>EN</dd>
          <dt>Design Working Life:</dt>
          <dd>50 years</dd>
        </Facts>
      </SectionBlock>
      <SectionBlock title="Current section and extreme" height={234} pad="2px 1px">
        <Facts $label={87}>
          <dt>Section:</dt>
          <dd>Section 1</dd>
          <dt>Extreme:</dt>
          <dd>Extreme 1</dd>
          <dt>Design Member:</dt>
          <dd>M 1</dd>
          <dt>Member Type:</dt>
          <dd>Beam</dd>
          <dt>Exposure Class:</dt>
          <dd>XC3, XD1</dd>
        </Facts>
        <MiniDrawing>
          <SectionThumb />
        </MiniDrawing>
      </SectionBlock>
      <SectionBlock title="Current section check" height={149} pad="1px 0 0">
        <StatusLine>
          Current section status:
          <OkIcon />
        </StatusLine>
        <StatusLine>
          Current extreme status:
          <OkIcon />
        </StatusLine>
        <CheckBox>
          <CheckTable>
            <colgroup>
              <col width="37" />
              <col width="52" />
              <col width="36" />
              <col />
            </colgroup>
            <thead>
              <tr>
                <th>Check</th>
                <th>Value</th>
                <th>Status</th>
                <th />
              </tr>
            </thead>
            <tbody>
              {CHECKS.map(([name, value]) => (
                <tr key={name}>
                  <td>{name}</td>
                  <td>{value}</td>
                  <td>
                    <OkIcon />
                  </td>
                  <td />
                </tr>
              ))}
            </tbody>
          </CheckTable>
        </CheckBox>
      </SectionBlock>
      <SectionBlock title="Current extreme forces" height={126} pad="6px 6px">
        <ForceTable>
          <thead>
            <tr>
              <th />
              <th>ULS</th>
            </tr>
          </thead>
          <tbody>
            {FORCES.map(([name, value]) => (
              <tr key={name}>
                <th scope="row">{name}</th>
                <td>{value}</td>
              </tr>
            ))}
          </tbody>
        </ForceTable>
      </SectionBlock>
    </InfoList>
  </Pane>
)

const App = () => (
  <>
    <GlobalStyle />
    <Page>
      <TitleBar>
        <QuickAccess>
          <LogoIcon />
          <NewIcon />
          <OpenIcon />
          <SaveIcon />
          <CaretIcon />
        </QuickAccess>
        <WindowTitle>IDEA StatiCa RCS(64bit) - Results_ULS.IdeaRcs (Results_ULS.IdeaRcs)</WindowTitle>
        <WindowButtons>
          <button aria-label="Minimize">
            <Icon w={10}>
              <path d="M0 4.500h10" stroke="#999" />
            </Icon>
          </button>
          <button aria-label="Restore">
            <Icon w={10}>
              <path d="M0.500 2.500h7v7h-7zM2.500 2.500v-2h7v7h-2" stroke="#999" />
            </Icon>
          </button>
          <button aria-label="Close">
            <Icon w={10}>
              <path d="M0 0l10 10M10 0L0 10" stroke="#999" />
            </Icon>
          </button>
        </WindowButtons>
      </TitleBar>
      <TabBar>
        <RibbonTab $kind="file">File</RibbonTab>
        <RibbonTab $kind="active">Home</RibbonTab>
        <RibbonTab>View</RibbonTab>
        <Expander aria-label="Collapse ribbon">
          <Icon w={12} h={8}>
            <path d="M1 1l5 5 5-5" stroke="#000" strokeWidth="2" />
          </Icon>
        </Expander>
      </TabBar>
      <RibbonBar />
      <Workspace>
        <Navigator />
        <Centre>
          <DocTabs>
            <DocTab>Main</DocTab>
            <Icon w={25} h={10}>
              <path d="M0 2h8" stroke="#222" strokeWidth="2" />
              <path d="M0 5h8L4 9z" fill="#222" />
              <path d="M16.500 1l8 8M24.500 1l-8 8" stroke="#222" strokeWidth="1.500" />
            </Icon>
          </DocTabs>
          <Canvas>
            <FitButton aria-label="Zoom to fit">
              <Icon w={16}>
                <path d="M1 1h4L1 5zM15 1v4l-4-4zM1 15v-4l4 4zM15 15h-4l4-4z" fill="#777" />
                <path d="M2 2l4 3M14 2l-4 3M2 14l4-3M14 14l-4-3" stroke="#777" />
              </Icon>
            </FitButton>
            <SectionDiagram />
          </Canvas>
          <DataPane />
        </Centre>
        <InfoPane />
      </Workspace>
      <StatusBar>Calculation duration: 0 min, 0 s, 1 ms</StatusBar>
    </Page>
  </>
)

export default App
